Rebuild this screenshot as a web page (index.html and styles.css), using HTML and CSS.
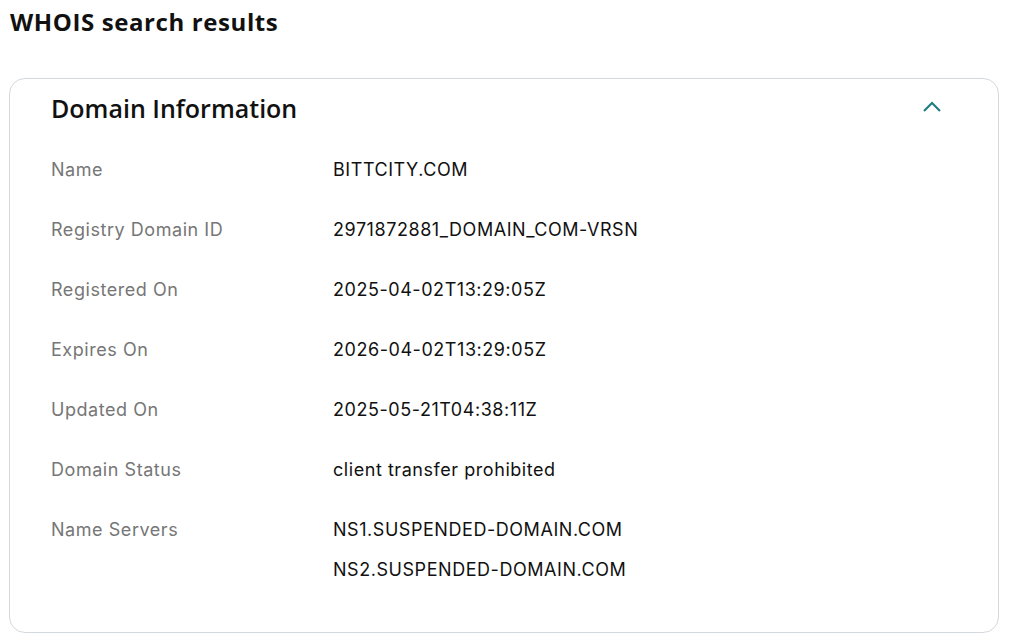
FILE: index.html
```html
<!DOCTYPE html>
<html lang="en">
<head>
<meta charset="utf-8">
<title>WHOIS search results</title>
<link rel="stylesheet" href="styles.css">
</head>
<body>
<main class="page">
  <h1 class="page-title">WHOIS search results</h1>
  <section class="card">
    <header class="card-header">
      <h2 class="card-title">Domain Information</h2>
      <button class="toggle" aria-label="Collapse">
        <svg width="24" height="24" viewBox="0 0 24 24" fill="none"><polyline points="4,16 12,8 20,16" stroke="#1b7b7f" stroke-width="2"/></svg>
      </button>
    </header>
    <dl class="info">
      <div class="row"><dt>Name</dt><dd>BITTCITY.COM</dd></div>
      <div class="row"><dt>Registry Domain ID</dt><dd>2971872881_DOMAIN_COM-VRSN</dd></div>
      <div class="row"><dt>Registered On</dt><dd>2025-04-02T13:29:05Z</dd></div>
      <div class="row"><dt>Expires On</dt><dd>2026-04-02T13:29:05Z</dd></div>
      <div class="row"><dt>Updated On</dt><dd>2025-05-21T04:38:11Z</dd></div>
      <div class="row"><dt>Domain Status</dt><dd>client transfer prohibited</dd></div>
      <div class="row"><dt>Name Servers</dt><dd><span class="line">NS1.SUSPENDED-DOMAIN.COM</span><span class="line">NS2.SUSPENDED-DOMAIN.COM</span></dd></div>
    </dl>
  </section>
</main>
</body>
</html>
```

FILE: styles.css
```css
* { box-sizing: border-box; }
html, body { margin: 0; padding: 0; background: #fff; }
body {
  font-family: "Inter", "Liberation Sans", sans-serif;
  color: #111;
}
.page { padding: 0 10px 0 9px; }
.page-title {
  margin: 0;
  padding: 6px 0 0 1px;
  height: 78px;
  font-family: "Open Sans", "Liberation Sans", sans-serif;
  font-size: 24px;
  line-height: 32px;
  font-weight: 700;
  letter-spacing: 0.6px;
  color: #111;
}
.card {
  border: 1px solid #d4d9de;
  border-radius: 16px;
  padding: 0 54px 33px 41px;
}
.card-header {
  display: flex;
  align-items: center;
  justify-content: space-between;
  height: 60px;
}
.card-title {
  margin: 0 0 3px;
  font-family: "Open Sans", "Liberation Sans", sans-serif;
  font-size: 25px;
  font-weight: 600;
  line-height: 56px;
  color: #111;
}
.toggle {
  border: 0;
  background: none;
  padding: 0;
  display: flex;
  margin-bottom: 4px;
}
.info { margin: 0; }
.row {
  display: flex;
  padding: 11px 0 9px;
  font-size: 18px;
  line-height: 40px;
  letter-spacing: 0.55px;
}
.row dt {
  width: 282px;
  flex: none;
  color: #767676;
}
.row dd {
  margin: 0;
  color: #111;
  display: flex;
  flex-direction: column;
}
```
